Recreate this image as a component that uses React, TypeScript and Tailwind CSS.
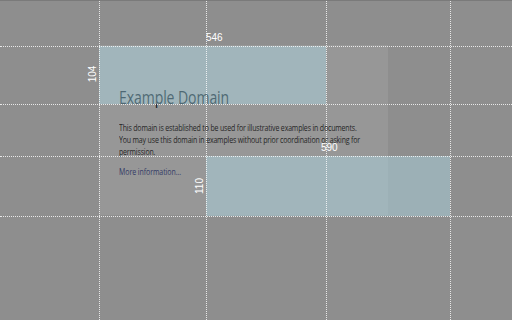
export default function App() {
  const vLines = [99, 206, 326, 450];
  const hLines = [45, 103, 155, 215];

  return (
    <div className="relative w-[512px] h-[320px] overflow-hidden bg-[#8e8e8e] border-t border-[#7a7a7a] font-['Open_Sans',sans-serif]">
      {/* page content */}
      <div className="pt-[44px] pl-[99px]">
        <div className="w-[289px] h-[170px] bg-[#979797] px-[20px] pt-[40px]">
          <h1 className="origin-left scale-x-[0.78] text-[18px] leading-[24px] text-[#0c1620] tracking-[-0.1px]">Example Domain</h1>
          <p className="origin-left scale-x-[0.775] mt-[13px] w-[320px] text-[9px] leading-[12px] text-[#262626] tracking-[-0.2px]">
            This domain is established to be used for illustrative examples in documents. You may use this domain in examples without prior coordination or asking for permission.
          </p>
          <p className="origin-left scale-x-[0.78] mt-[8px] text-[9px] leading-[12px] text-[#333a66] tracking-[-0.1px]">More information...</p>
        </div>
      </div>

      {/* highlight boxes */}
      <div className="absolute left-[99px] top-[45px] w-[227px] h-[58px] bg-[#b2e4f3]/40" />
      <div className="absolute left-[206px] top-[155px] w-[244px] h-[60px] bg-[#b2e4f3]/40" />

      {/* grid lines */}
      {vLines.map((x) => (
        <div key={x} className="absolute top-0 bottom-0 border-l border-dotted border-white/80" style={{ left: x }} />
      ))}
      {hLines.map((y) => (
        <div key={y} className="absolute left-0 right-0 border-t border-dotted border-white/80" style={{ top: y }} />
      ))}

      {/* labels */}
      <span className="absolute left-[206px] top-[31px] text-[10px] leading-[12px] text-white font-['Liberation_Sans',sans-serif]">546</span>
      <span className="absolute left-[321px] top-[141px] text-[10px] leading-[12px] text-white font-['Liberation_Sans',sans-serif]">590</span>
      <span className="absolute left-[85px] top-[67px] -rotate-90 text-[10px] leading-[12px] text-white font-['Liberation_Sans',sans-serif]">104</span>
      <span className="absolute left-[192px] top-[179px] -rotate-90 text-[10px] leading-[12px] text-white font-['Liberation_Sans',sans-serif]">110</span>
    </div>
  );
}
